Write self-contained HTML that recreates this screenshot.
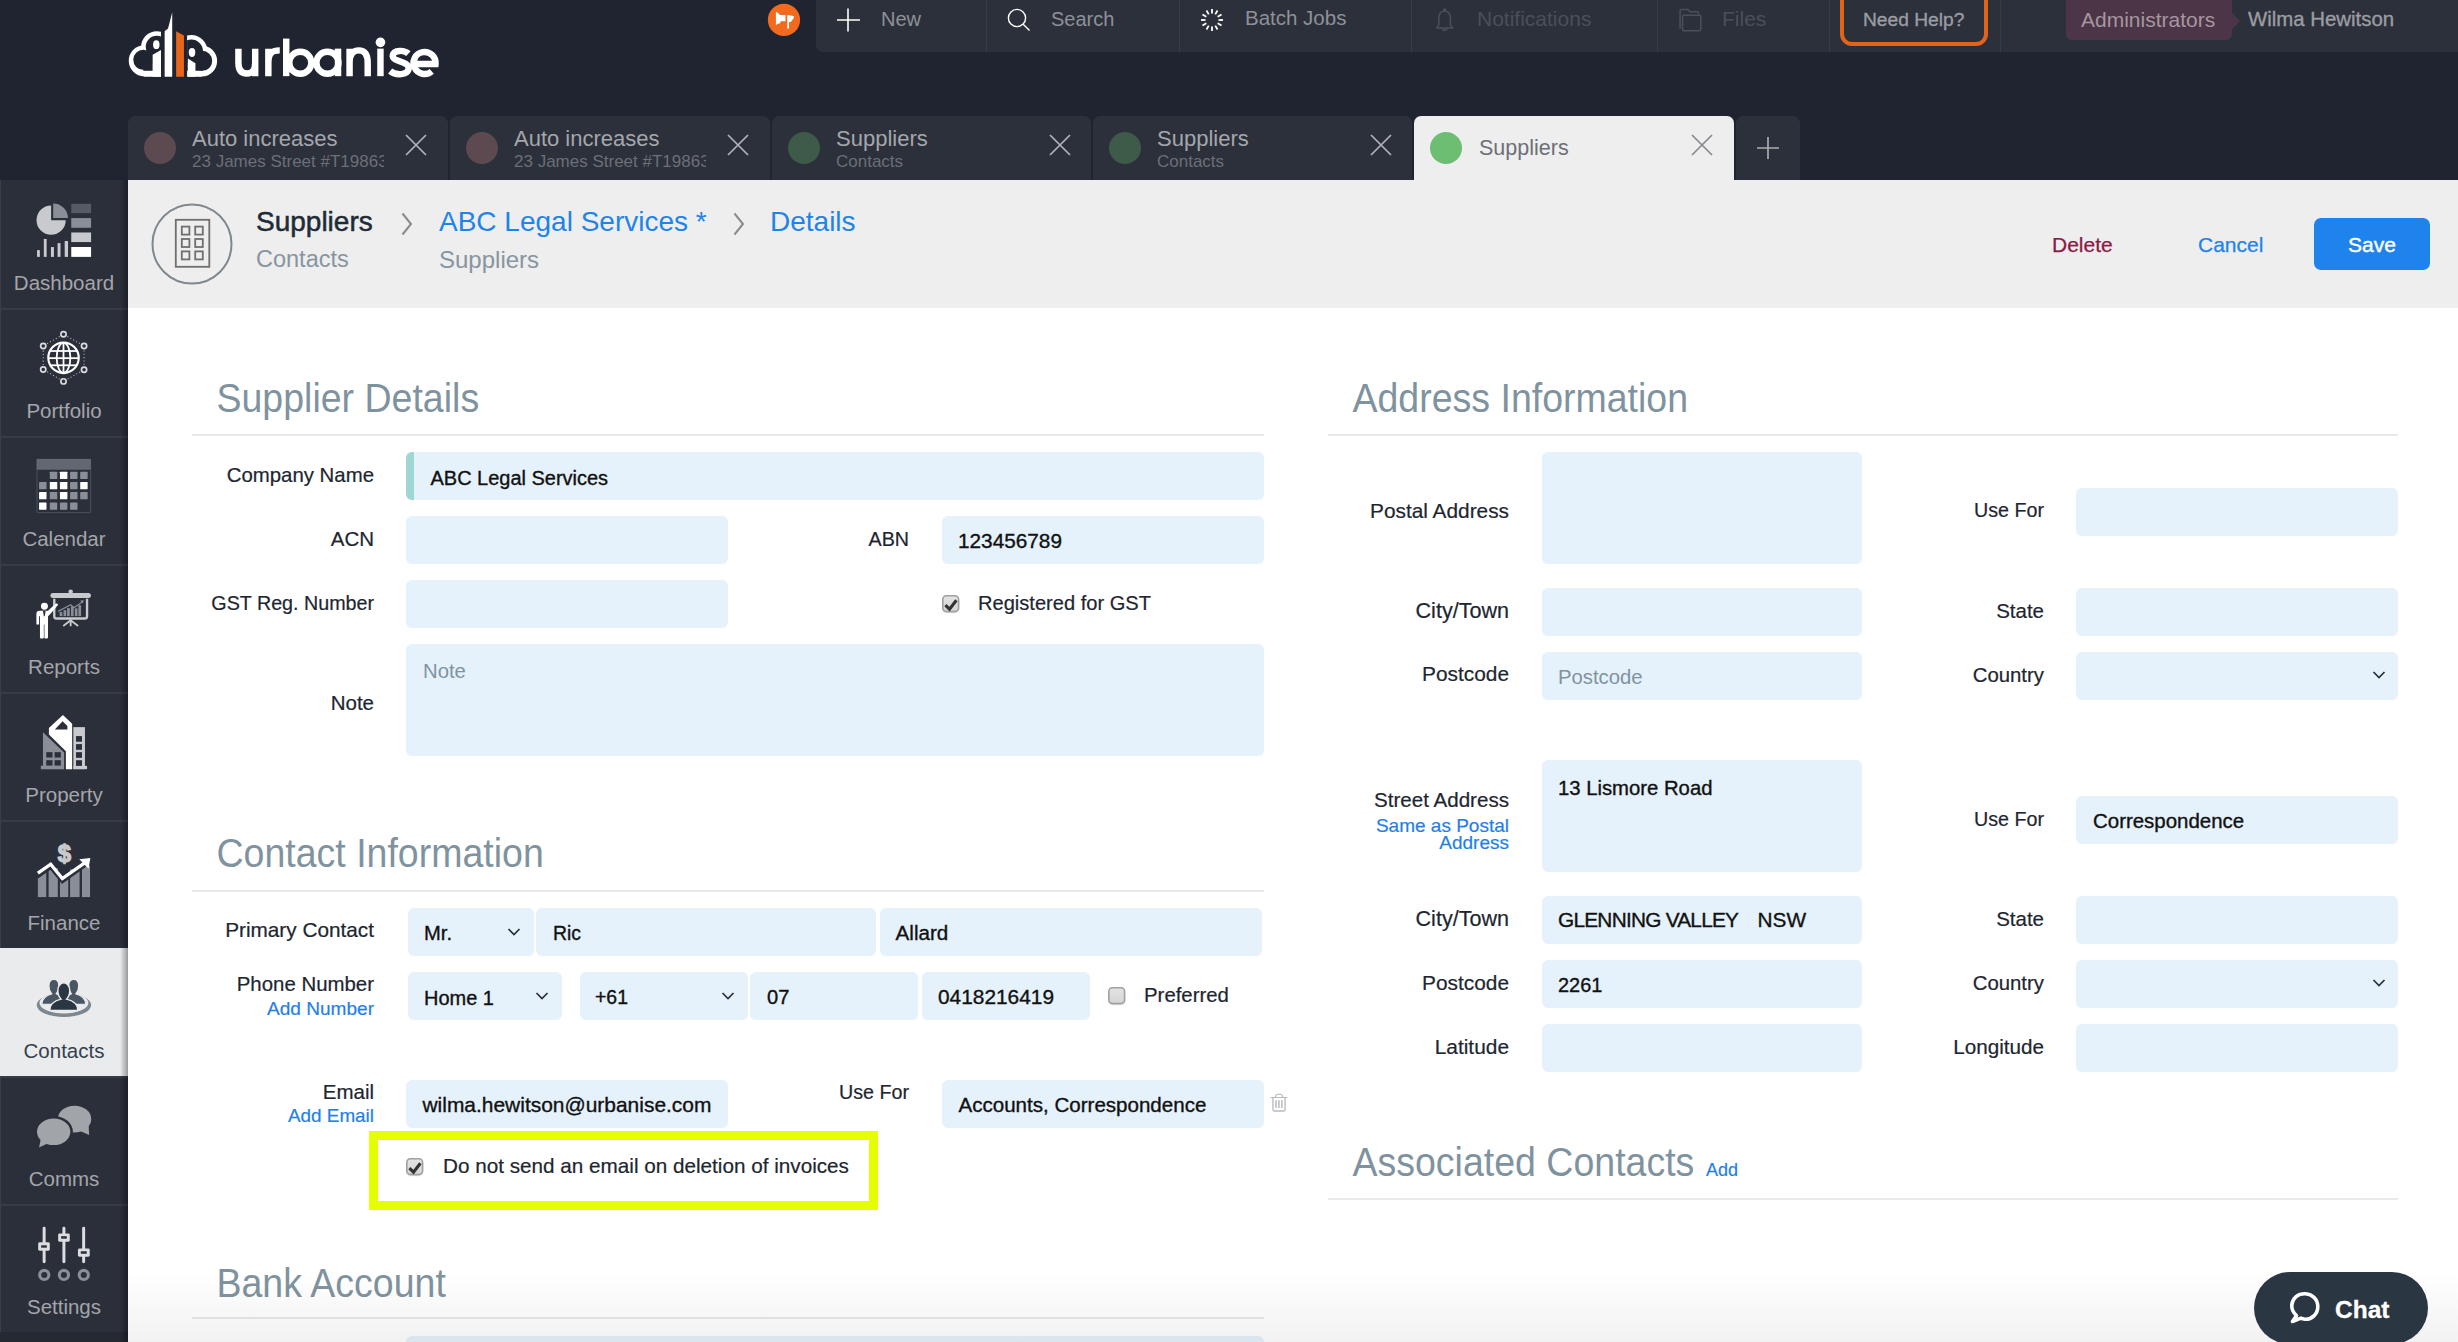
<!DOCTYPE html><html><head><meta charset="utf-8"><style>
html,body{margin:0;padding:0;}
body{width:2458px;height:1342px;overflow:hidden;position:relative;background:#fff;font-family:"Liberation Sans", sans-serif;}
.t{position:absolute;white-space:nowrap;}
.b{position:absolute;}
</style></head><body>
<div class="b" style="left:0px;top:0px;width:2458px;height:180px;background:#1f2430;border-radius:0;"></div>
<svg class="b" style="left:125px;top:10px;" width="100" height="70" viewBox="0 0 1917 1342">
<defs>
<clipPath id="cl"><rect x="0" y="0" width="690" height="1342"/></clipPath>
<clipPath id="cr"><rect x="1190" y="0" width="800" height="1342"/></clipPath>
</defs>
<g clip-path="url(#cl)">
<circle cx="370" cy="975" r="298" fill="#fff"/>
<circle cx="610" cy="705" r="300" fill="#fff"/>
<rect x="370" y="975" width="320" height="305" fill="#fff"/>
<circle cx="350" cy="955" r="192" fill="#1f2430"/>
<circle cx="610" cy="705" r="212" fill="#1f2430"/>
<rect x="350" y="900" width="185" height="265" fill="#1f2430"/>
<polygon points="530,860 690,765 690,1280 530,1280" fill="#fff"/>
<ellipse cx="600" cy="665" rx="62" ry="85" fill="#fff"/>
</g>
<g clip-path="url(#cr)">
<circle cx="1270" cy="790" r="310" fill="#fff"/>
<circle cx="1468" cy="978" r="298" fill="#fff"/>
<rect x="1190" y="978" width="278" height="302" fill="#fff"/>
<circle cx="1270" cy="790" r="225" fill="#1f2430"/>
<circle cx="1480" cy="975" r="192" fill="#1f2430"/>
<rect x="1190" y="900" width="300" height="265" fill="#1f2430"/>
<polygon points="1205,930 1350,1020 1350,1280 1205,1280" fill="#fff"/>
<ellipse cx="1285" cy="815" rx="62" ry="85" fill="#fff"/>
</g>
<polygon points="760,405 825,355 905,45 905,1280 760,1280" fill="#fff"/>
<polygon points="980,405 1130,490 1130,1280 980,1280" fill="#e8651a"/>
</svg>
<svg class="b" style="left:120px;top:5px;" width="330" height="85" viewBox="0 0 2458 633"><g fill="none" stroke="#fff" stroke-width="48">
<path d="M882,325 V430 C882,488 906,510 944,510 C984,510 1007,488 1007,430 V325 M1007,400 V530"/>
<path d="M1105,325 V530 M1105,430 C1105,365 1125,338 1190,338"/>
<path d="M1238,250 V530"/><circle cx="1343" cy="430" r="82"/>
<circle cx="1545" cy="430" r="82"/><path d="M1624,325 V530"/>
<path d="M1710,530 V325 M1710,430 C1710,365 1740,338 1778,338 C1818,338 1845,365 1845,430 V530"/>
<path d="M1940,325 V530"/>
<path d="M2148,362 C2120,336 2040,330 2032,375 C2024,425 2150,415 2150,470 C2150,528 2050,524 2012,492"/>
<path d="M2194,440 H2350 A82,82 0 1 0 2322,494"/>
</g><circle cx="1940" cy="278" r="36" fill="#fff"/></svg>
<svg class="b" style="left:764px;top:0px;" width="40" height="40" viewBox="0 0 1342 1342"><circle cx="670" cy="670" r="540" fill="#f26a1e"/>
<polygon points="400,400 470,440 540,500 720,500 720,710 560,710 540,780 470,800 400,840" fill="#fff"/>
<polygon points="780,500 1000,540 1000,600 900,740 840,740 840,960 780,960" fill="#fff"/></svg>
<div class="b" style="left:816px;top:0px;width:1642px;height:52px;background:#2c303b;border-radius:0 0 0 7px;"></div>
<div class="b" style="left:986px;top:0px;width:1px;height:52px;background:#383c47;border-radius:0;"></div>
<div class="b" style="left:1179px;top:0px;width:1px;height:52px;background:#383c47;border-radius:0;"></div>
<div class="b" style="left:1411px;top:0px;width:1px;height:52px;background:#383c47;border-radius:0;"></div>
<div class="b" style="left:1657px;top:0px;width:1px;height:52px;background:#383c47;border-radius:0;"></div>
<div class="b" style="left:1829px;top:0px;width:1px;height:52px;background:#383c47;border-radius:0;"></div>
<div class="b" style="left:2000px;top:0px;width:1px;height:52px;background:#383c47;border-radius:0;"></div>
<svg class="b" style="left:836px;top:7px;" width="26" height="26" viewBox="0 0 26 26"><path d="M12 1.5V24.5M1 13H24" stroke="#fff" stroke-width="1.6"/></svg>
<div class="t" style="left:881.0px;top:8.9px;font-size:20px;line-height:20px;color:#8e9197;font-weight:normal;">New</div>
<svg class="b" style="left:1006px;top:7px;" width="28" height="28" viewBox="0 0 28 28"><circle cx="11" cy="11" r="8.6" stroke="#fff" stroke-width="1.4" fill="none"/><path d="M17.2 17.2L23.5 23.5" stroke="#fff" stroke-width="1.4"/></svg>
<div class="t" style="left:1051.0px;top:8.9px;font-size:20px;line-height:20px;color:#8e9197;font-weight:normal;">Search</div>
<svg class="b" style="left:1200px;top:8px;" width="24" height="24" viewBox="0 0 24 24"><line x1="18.50" y1="12.00" x2="23.00" y2="12.00" stroke="#fff" stroke-width="1.8"/><line x1="17.63" y1="15.25" x2="21.53" y2="17.50" stroke="#fff" stroke-width="1.8"/><line x1="15.25" y1="17.63" x2="17.50" y2="21.53" stroke="#fff" stroke-width="1.8"/><line x1="12.00" y1="18.50" x2="12.00" y2="23.00" stroke="#fff" stroke-width="1.8"/><line x1="8.75" y1="17.63" x2="6.50" y2="21.53" stroke="#fff" stroke-width="1.8"/><line x1="6.37" y1="15.25" x2="2.47" y2="17.50" stroke="#fff" stroke-width="1.8"/><line x1="5.50" y1="12.00" x2="1.00" y2="12.00" stroke="#fff" stroke-width="1.8"/><line x1="6.37" y1="8.75" x2="2.47" y2="6.50" stroke="#fff" stroke-width="1.8"/><line x1="8.75" y1="6.37" x2="6.50" y2="2.47" stroke="#fff" stroke-width="1.8"/><line x1="12.00" y1="5.50" x2="12.00" y2="1.00" stroke="#fff" stroke-width="1.8"/><line x1="15.25" y1="6.37" x2="17.50" y2="2.47" stroke="#fff" stroke-width="1.8"/><line x1="17.63" y1="8.75" x2="21.53" y2="6.50" stroke="#fff" stroke-width="1.8"/></svg>
<div class="t" style="left:1245.0px;top:8.4px;font-size:20.5px;line-height:20.5px;color:#8e9197;font-weight:normal;">Batch Jobs</div>
<svg class="b" style="left:1420px;top:0px;" width="340" height="45" viewBox="0 0 2458 325"><g fill="none" stroke="#4a4f59" stroke-width="11" stroke-linejoin="round">
<path d="M120,202 L136,180 L136,132 C136,98 152,82 178,80 C204,82 220,98 220,132 L220,180 L236,202 Z"/>
<circle cx="178" cy="72" r="7"/>
<path d="M160,208 Q178,232 196,208"/>
<path d="M1880,208 V78 Q1880,68 1890,68 H1938 L1950,84 H2004 Q2014,84 2014,94 V106"/>
<path d="M1898,214 V120 Q1898,110 1908,110 H2020 Q2030,110 2030,120 V212 Q2030,222 2020,222 H1908 Q1898,222 1898,214 Z"/>
</g></svg>
<div class="t" style="left:1477.0px;top:8.0px;font-size:21px;line-height:21px;color:#4a4f59;font-weight:normal;">Notifications</div>
<div class="t" style="left:1722.0px;top:8.0px;font-size:21px;line-height:21px;color:#4a4f59;font-weight:normal;">Files</div>
<div class="b" style="left:1840px;top:-12px;width:140px;height:50px;border:4px solid #e0651b;border-radius:12px;"></div>
<div class="t" style="left:1863.0px;top:9.7px;font-size:19.2px;line-height:19.2px;color:#9a9da2;font-weight:normal;-webkit-text-stroke:0.35px #9a9da2;">Need Help?</div>
<div class="b" style="left:2066px;top:0px;width:166px;height:40px;background:#4b3547;border-radius:0 0 6px 6px;"></div>
<svg class="b" style="left:2231px;top:12px;" width="10" height="18" viewBox="0 0 10 18"><polygon points="0,0 9,9 0,18" fill="#4b3547"/></svg>
<div class="t" style="left:2081.0px;top:8.6px;font-size:21px;line-height:21px;color:#a6969f;font-weight:normal;">Administrators</div>
<div class="t" style="left:2248.0px;top:9.1px;font-size:20.4px;line-height:20.4px;color:#9b9da1;font-weight:normal;-webkit-text-stroke:0.35px #9b9da1;">Wilma Hewitson</div>
<div class="b" style="left:128px;top:116px;width:320px;height:64px;background:#2c303b;border-radius:7px 7px 0 0;"></div>
<svg class="b" style="left:144px;top:132px;" width="32" height="32" viewBox="0 0 32 32"><circle cx="16" cy="16" r="16" fill="#5c4a50"/></svg>
<div class="b" style="left:192px;top:120px;width:192px;height:56px;overflow:hidden;">
<div class="t" style="left:0;top:7.6px;font-size:22px;line-height:22px;color:#a4a7ab;">Auto increases</div>
<div class="t" style="left:0;top:33.4px;font-size:17px;line-height:17px;color:#6b6f76;">23 James Street #T19863</div>
</div>
<svg class="b" style="left:405px;top:134px;" width="22" height="22" viewBox="0 0 22 22"><path d="M1 1L21 21M21 1L1 21" stroke="#b2b5b8" stroke-width="1.7"/></svg>
<div class="b" style="left:450px;top:116px;width:320px;height:64px;background:#2c303b;border-radius:7px 7px 0 0;"></div>
<svg class="b" style="left:466px;top:132px;" width="32" height="32" viewBox="0 0 32 32"><circle cx="16" cy="16" r="16" fill="#5c4a50"/></svg>
<div class="b" style="left:514px;top:120px;width:192px;height:56px;overflow:hidden;">
<div class="t" style="left:0;top:7.6px;font-size:22px;line-height:22px;color:#a4a7ab;">Auto increases</div>
<div class="t" style="left:0;top:33.4px;font-size:17px;line-height:17px;color:#6b6f76;">23 James Street #T19863</div>
</div>
<svg class="b" style="left:727px;top:134px;" width="22" height="22" viewBox="0 0 22 22"><path d="M1 1L21 21M21 1L1 21" stroke="#b2b5b8" stroke-width="1.7"/></svg>
<div class="b" style="left:772px;top:116px;width:319px;height:64px;background:#2c303b;border-radius:7px 7px 0 0;"></div>
<svg class="b" style="left:788px;top:132px;" width="32" height="32" viewBox="0 0 32 32"><circle cx="16" cy="16" r="16" fill="#3e5a48"/></svg>
<div class="b" style="left:836px;top:120px;width:192px;height:56px;overflow:hidden;">
<div class="t" style="left:0;top:7.6px;font-size:22px;line-height:22px;color:#a4a7ab;">Suppliers</div>
<div class="t" style="left:0;top:33.4px;font-size:17px;line-height:17px;color:#6b6f76;">Contacts</div>
</div>
<svg class="b" style="left:1049px;top:134px;" width="22" height="22" viewBox="0 0 22 22"><path d="M1 1L21 21M21 1L1 21" stroke="#b2b5b8" stroke-width="1.7"/></svg>
<div class="b" style="left:1093px;top:116px;width:319px;height:64px;background:#2c303b;border-radius:7px 7px 0 0;"></div>
<svg class="b" style="left:1109px;top:132px;" width="32" height="32" viewBox="0 0 32 32"><circle cx="16" cy="16" r="16" fill="#3e5a48"/></svg>
<div class="b" style="left:1157px;top:120px;width:192px;height:56px;overflow:hidden;">
<div class="t" style="left:0;top:7.6px;font-size:22px;line-height:22px;color:#a4a7ab;">Suppliers</div>
<div class="t" style="left:0;top:33.4px;font-size:17px;line-height:17px;color:#6b6f76;">Contacts</div>
</div>
<svg class="b" style="left:1370px;top:134px;" width="22" height="22" viewBox="0 0 22 22"><path d="M1 1L21 21M21 1L1 21" stroke="#b2b5b8" stroke-width="1.7"/></svg>
<div class="b" style="left:1414px;top:116px;width:320px;height:66px;background:#eeeeee;border-radius:7px 7px 0 0;"></div>
<svg class="b" style="left:1430px;top:132px;" width="32" height="32" viewBox="0 0 32 32"><circle cx="16" cy="16" r="16" fill="#6dbd72"/></svg>
<div class="t" style="left:1479.0px;top:137.5px;font-size:21.5px;line-height:21.5px;color:#6c7076;font-weight:normal;">Suppliers</div>
<svg class="b" style="left:1691px;top:134px;" width="22" height="22" viewBox="0 0 22 22"><path d="M1 1L21 21M21 1L1 21" stroke="#86898d" stroke-width="1.7"/></svg>
<div class="b" style="left:1736px;top:116px;width:64px;height:64px;background:#2c303b;border-radius:7px 7px 0 0;"></div>
<svg class="b" style="left:1756px;top:136px;" width="24" height="24" viewBox="0 0 24 24"><path d="M12 1V23M1 12H23" stroke="#a9acb0" stroke-width="1.7"/></svg>
<div class="b" style="left:0px;top:180px;width:128px;height:1162px;background:#2b2f3a;border-radius:0;"></div>
<div class="b" style="left:0px;top:180px;width:1px;height:1162px;background:#3a3e49;border-radius:0;"></div>
<div class="b" style="left:0px;top:1332px;width:128px;height:10px;background:#252932;border-radius:0;"></div>
<div class="b" style="left:0px;top:308px;width:128px;height:2px;background:#383c47;border-radius:0;"></div>
<div class="b" style="left:0px;top:436px;width:128px;height:2px;background:#383c47;border-radius:0;"></div>
<div class="b" style="left:0px;top:564px;width:128px;height:2px;background:#383c47;border-radius:0;"></div>
<div class="b" style="left:0px;top:692px;width:128px;height:2px;background:#383c47;border-radius:0;"></div>
<div class="b" style="left:0px;top:820px;width:128px;height:2px;background:#383c47;border-radius:0;"></div>
<div class="b" style="left:0px;top:948px;width:128px;height:2px;background:#383c47;border-radius:0;"></div>
<div class="b" style="left:0px;top:1076px;width:128px;height:2px;background:#383c47;border-radius:0;"></div>
<div class="b" style="left:0px;top:1204px;width:128px;height:2px;background:#383c47;border-radius:0;"></div>
<div class="b" style="left:0px;top:948px;width:128px;height:128px;background:#eaebed;border-radius:0;"></div>
<div class="b" style="left:120px;top:180px;width:8px;height:1162px;background:linear-gradient(to right, rgba(0,0,0,0), rgba(0,0,0,0.35));border-radius:0;"></div>
<div class="t" style="left:-536.0px;width:1200px;text-align:center;top:272.6px;font-size:20.5px;line-height:20.5px;color:#a4a6aa;font-weight:normal;">Dashboard</div>
<div class="t" style="left:-536.0px;width:1200px;text-align:center;top:400.6px;font-size:20.5px;line-height:20.5px;color:#a4a6aa;font-weight:normal;">Portfolio</div>
<div class="t" style="left:-536.0px;width:1200px;text-align:center;top:528.6px;font-size:20.5px;line-height:20.5px;color:#a4a6aa;font-weight:normal;">Calendar</div>
<div class="t" style="left:-536.0px;width:1200px;text-align:center;top:656.6px;font-size:20.5px;line-height:20.5px;color:#a4a6aa;font-weight:normal;">Reports</div>
<div class="t" style="left:-536.0px;width:1200px;text-align:center;top:784.6px;font-size:20.5px;line-height:20.5px;color:#a4a6aa;font-weight:normal;">Property</div>
<div class="t" style="left:-536.0px;width:1200px;text-align:center;top:912.6px;font-size:20.5px;line-height:20.5px;color:#a4a6aa;font-weight:normal;">Finance</div>
<div class="t" style="left:-536.0px;width:1200px;text-align:center;top:1040.6px;font-size:20.5px;line-height:20.5px;color:#34414c;font-weight:normal;">Contacts</div>
<div class="t" style="left:-536.0px;width:1200px;text-align:center;top:1168.6px;font-size:20.5px;line-height:20.5px;color:#a4a6aa;font-weight:normal;">Comms</div>
<div class="t" style="left:-536.0px;width:1200px;text-align:center;top:1296.6px;font-size:20.5px;line-height:20.5px;color:#a4a6aa;font-weight:normal;">Settings</div>
<svg class="b" style="left:0px;top:180px;" width="140" height="140" viewBox="0 0 1342 1342">
<path d="M490,385 L490,245 A140,140 0 1 0 630,385 Z" fill="#c9cacd"/>
<path d="M510,365 L510,225 A142,142 0 0 1 652,365 Z" fill="#8a8e96"/>
<rect x="683" y="228" width="190" height="90" fill="#555a64"/>
<rect x="683" y="365" width="190" height="93" fill="#8a8e96"/>
<rect x="683" y="503" width="190" height="92" fill="#c9cacd"/>
<rect x="683" y="642" width="190" height="95" fill="#fff"/>
<rect x="355" y="672" width="27" height="65" fill="#c9cacd"/>
<rect x="420" y="565" width="27" height="172" fill="#c9cacd"/>
<rect x="488" y="643" width="29" height="94" fill="#c9cacd"/>
<rect x="552" y="605" width="28" height="132" fill="#c9cacd"/>
<rect x="620" y="585" width="32" height="152" fill="#c9cacd"/>
</svg>
<svg class="b" style="left:20px;top:320px;" width="90" height="80" viewBox="0 0 1510 1342"><line x1="795" y1="277" x2="1010" y2="398" stroke="#b9bbbf" stroke-width="18" stroke-dasharray="18 38"/><line x1="1075" y1="510" x2="1075" y2="760" stroke="#b9bbbf" stroke-width="18" stroke-dasharray="18 38"/><line x1="1010" y1="872" x2="795" y2="993" stroke="#b9bbbf" stroke-width="18" stroke-dasharray="18 38"/><line x1="665" y1="992" x2="455" y2="868" stroke="#b9bbbf" stroke-width="18" stroke-dasharray="18 38"/><line x1="390" y1="755" x2="390" y2="510" stroke="#b9bbbf" stroke-width="18" stroke-dasharray="18 38"/><line x1="455" y1="398" x2="665" y2="277" stroke="#b9bbbf" stroke-width="18" stroke-dasharray="18 38"/><circle cx="730" cy="240" r="44" fill="#2b2f3a" stroke="#dadbdd" stroke-width="28"/><circle cx="1075" cy="435" r="44" fill="#2b2f3a" stroke="#dadbdd" stroke-width="28"/><circle cx="1075" cy="835" r="44" fill="#2b2f3a" stroke="#dadbdd" stroke-width="28"/><circle cx="730" cy="1030" r="44" fill="#2b2f3a" stroke="#dadbdd" stroke-width="28"/><circle cx="390" cy="830" r="44" fill="#2b2f3a" stroke="#dadbdd" stroke-width="28"/><circle cx="390" cy="435" r="44" fill="#2b2f3a" stroke="#dadbdd" stroke-width="28"/>
<circle cx="730" cy="635" r="255" fill="#2b2f3a" stroke="#fff" stroke-width="36"/>
<ellipse cx="730" cy="635" rx="115" ry="250" fill="none" stroke="#fff" stroke-width="30"/>
<line x1="730" y1="385" x2="730" y2="885" stroke="#fff" stroke-width="30"/>
<line x1="500" y1="520" x2="960" y2="520" stroke="#fff" stroke-width="30"/>
<line x1="480" y1="640" x2="980" y2="640" stroke="#fff" stroke-width="30"/>
<line x1="500" y1="760" x2="960" y2="760" stroke="#fff" stroke-width="30"/>
</svg>
<svg class="b" style="left:20px;top:445px;" width="90" height="80" viewBox="0 0 1510 1342"><rect x="285" y="240" width="900" height="895" rx="14" fill="#2b2f3a" stroke="#545862" stroke-width="14"/><rect x="280" y="235" width="910" height="180" rx="10" fill="#636772"/><rect x="500" y="450" width="125" height="122" rx="8" fill="#8a8e96"/><rect x="670" y="450" width="125" height="122" rx="8" fill="#fff"/><rect x="840" y="450" width="125" height="122" rx="8" fill="#8a8e96"/><rect x="1010" y="450" width="125" height="122" rx="8" fill="#8a8e96"/><rect x="320" y="620" width="125" height="122" rx="8" fill="#8a8e96"/><rect x="500" y="620" width="125" height="122" rx="8" fill="#fff"/><rect x="670" y="620" width="125" height="122" rx="8" fill="#fff"/><rect x="840" y="620" width="125" height="122" rx="8" fill="#8a8e96"/><rect x="1010" y="620" width="125" height="122" rx="8" fill="#fff"/><rect x="320" y="790" width="125" height="122" rx="8" fill="#fff"/><rect x="500" y="790" width="125" height="122" rx="8" fill="#8a8e96"/><rect x="670" y="790" width="125" height="122" rx="8" fill="#fff"/><rect x="840" y="790" width="125" height="122" rx="8" fill="#8a8e96"/><rect x="1010" y="790" width="125" height="122" rx="8" fill="#8a8e96"/><rect x="320" y="965" width="125" height="122" rx="8" fill="#fff"/><rect x="500" y="965" width="125" height="122" rx="8" fill="#8a8e96"/><rect x="670" y="965" width="125" height="122" rx="8" fill="#8a8e96"/><rect x="840" y="965" width="125" height="122" rx="8" fill="#8a8e96"/></svg>
<svg class="b" style="left:20px;top:575px;" width="90" height="80" viewBox="0 0 1510 1342">
<circle cx="850" cy="280" r="38" fill="#c9cacd"/>
<rect x="510" y="300" width="680" height="85" rx="42" fill="#c9cacd"/>
<path d="M575,400 L575,690 Q575,730 615,730 L1085,730 Q1125,730 1125,690 L1125,400" fill="none" stroke="#c9cacd" stroke-width="40"/>
<path d="M850,740 L850,860 M850,760 L725,855 M850,760 L975,855" stroke="#c9cacd" stroke-width="30"/>
<rect x="665" y="620" width="45" height="70" fill="#8a8e96"/>
<rect x="730" y="590" width="45" height="100" fill="#8a8e96"/>
<rect x="790" y="555" width="45" height="135" fill="#8a8e96"/>
<rect x="855" y="525" width="45" height="165" fill="#8a8e96"/>
<rect x="920" y="560" width="45" height="130" fill="#8a8e96"/>
<rect x="980" y="505" width="45" height="185" fill="#8a8e96"/>
<polyline points="640,610 850,500 905,550 1040,455" fill="none" stroke="#8a8e96" stroke-width="20"/>
<polygon points="1010,430 1070,420 1055,480" fill="#8a8e96"/>
<circle cx="410" cy="525" r="58" fill="#fff"/>
<path d="M275,650 Q275,600 330,600 L470,600 L600,480 Q625,470 640,500 L520,640 L470,690 L470,1050 Q470,1065 450,1065 L420,1065 Q410,1065 410,1050 L410,830 L400,830 L400,1050 Q400,1065 385,1065 L350,1065 Q335,1065 335,1050 L335,690 L320,690 L320,830 L275,830 Z" fill="#fff"/>
<polygon points="385,605 430,605 415,690 400,690" fill="#2b2f3a"/>
</svg>
<svg class="b" style="left:20px;top:700px;" width="90" height="80" viewBox="0 0 1510 1342">
<polygon points="385,540 740,880 740,1160 350,1160 350,1105 385,1105" fill="#8a8e96"/>
<rect x="440" y="875" width="105" height="90" fill="#2b2f3a"/><rect x="580" y="875" width="105" height="90" fill="#2b2f3a"/>
<rect x="440" y="1010" width="105" height="90" fill="#2b2f3a"/><rect x="580" y="1010" width="105" height="90" fill="#2b2f3a"/>
<polygon points="485,470 720,250 875,400 875,1160 770,1160 770,860 485,580" fill="#fff"/>
<polygon points="585,495 715,355 795,435 795,495" fill="#2b2f3a"/>
<rect x="895" y="455" width="195" height="705" fill="#c9cacd"/>
<rect x="895" y="1105" width="230" height="55" fill="#c9cacd"/>
<rect x="940" y="605" width="100" height="95" fill="#2b2f3a"/><rect x="940" y="740" width="100" height="95" fill="#2b2f3a"/>
<rect x="940" y="875" width="100" height="95" fill="#2b2f3a"/><rect x="940" y="1010" width="100" height="95" fill="#2b2f3a"/>
</svg>
<svg class="b" style="left:20px;top:830px;" width="90" height="80" viewBox="0 0 1510 1342">
<rect x="300" y="700" width="140" height="425" fill="#8a8e96"/>
<rect x="480" y="640" width="155" height="485" fill="#8a8e96"/>
<rect x="670" y="780" width="140" height="345" fill="#8a8e96"/>
<rect x="840" y="660" width="160" height="465" fill="#8a8e96"/>
<rect x="1040" y="600" width="135" height="525" fill="#8a8e96"/>
<polyline points="290,780 515,620 710,860 1090,590" fill="none" stroke="#2b2f3a" stroke-width="70"/>
<polyline points="300,725 515,575 710,815 1080,555" fill="none" stroke="#fff" stroke-width="55"/>
<polygon points="995,490 1180,468 1150,648" fill="#fff"/>
<text x="745" y="535" text-anchor="middle" font-family="Liberation Sans" font-weight="bold" font-size="400" fill="#c9cacd" stroke="#c9cacd" stroke-width="22">$</text>
</svg>
<svg class="b" style="left:20px;top:958px;" width="90" height="80" viewBox="0 0 1510 1342">
<ellipse cx="737" cy="790" rx="457" ry="200" fill="#7b8892"/>
<ellipse cx="737" cy="752" rx="410" ry="178" fill="#eaebed"/>
<g fill="#4a5763" stroke="#eaebed" stroke-width="22">
<path d="M365,775 C370,680 420,630 530,600 C500,570 485,530 485,470 C485,400 520,360 568,360 C616,360 653,400 653,470 C653,530 640,570 610,600 L700,640 L700,780 Z"/>
<path d="M1105,775 C1100,680 1050,630 940,600 C970,570 985,530 985,470 C985,400 950,360 902,360 C854,360 817,400 817,470 C817,530 830,570 860,600 L770,640 L770,780 Z"/>
</g>
<path d="M500,880 C500,790 560,720 690,690 C650,650 635,600 635,545 C635,470 680,415 735,415 C790,415 835,470 835,545 C835,600 820,650 780,690 C910,720 970,790 970,880 Z" fill="#2a3642" stroke="#eaebed" stroke-width="24"/>
</svg>
<svg class="b" style="left:20px;top:1086px;" width="90" height="80" viewBox="0 0 1510 1342">
<ellipse cx="915" cy="555" rx="280" ry="225" fill="#a1a4a9"/>
<polygon points="1150,630 1160,822 990,745" fill="#a1a4a9"/>
<ellipse cx="565" cy="768" rx="322" ry="266" fill="#2b2f3a"/>
<ellipse cx="565" cy="768" rx="280" ry="222" fill="#a1a4a9"/>
<polygon points="350,880 320,1030 470,960" fill="#a1a4a9"/>
</svg>
<svg class="b" style="left:20px;top:1214px;" width="90" height="80" viewBox="0 0 1510 1342">
<path d="M405,240V800 M737,240V800 M1068,240V800" stroke="#dcdde0" stroke-width="50" stroke-linecap="round"/>
<rect x="305" y="475" width="195" height="140" rx="25" fill="#dcdde0"/><rect x="355" y="525" width="95" height="40" fill="#2b2f3a"/>
<rect x="640" y="325" width="195" height="140" rx="25" fill="#dcdde0"/><rect x="690" y="372" width="95" height="42" fill="#2b2f3a"/>
<rect x="972" y="577" width="198" height="142" rx="25" fill="#dcdde0"/><rect x="1020" y="625" width="100" height="42" fill="#2b2f3a"/>
<circle cx="407" cy="1022" r="77" fill="none" stroke="#8a8e96" stroke-width="52"/>
<circle cx="737" cy="1022" r="77" fill="none" stroke="#8a8e96" stroke-width="52"/>
<circle cx="1070" cy="1022" r="77" fill="none" stroke="#8a8e96" stroke-width="52"/>
</svg>
<div class="b" style="left:128px;top:180px;width:2330px;height:128px;background:#eeeeee;border-radius:0;"></div>
<svg class="b" style="left:150px;top:202px;" width="84" height="84" viewBox="0 0 84 84"><circle cx="42" cy="42" r="39.5" fill="none" stroke="#7f888e" stroke-width="2"/>
<rect x="25.8" y="17.8" width="33.5" height="47" fill="none" stroke="#6f6f6f" stroke-width="1.8"/>
<rect x="31.8" y="24.6" width="7.6" height="8" fill="none" stroke="#6f6f6f" stroke-width="1.8"/>
<rect x="45.2" y="24.6" width="7.6" height="8" fill="none" stroke="#6f6f6f" stroke-width="1.8"/>
<rect x="31.8" y="37" width="7.6" height="8" fill="none" stroke="#6f6f6f" stroke-width="1.8"/>
<rect x="45.2" y="37" width="7.6" height="8" fill="none" stroke="#6f6f6f" stroke-width="1.8"/>
<rect x="31.8" y="49.4" width="7.6" height="8" fill="none" stroke="#6f6f6f" stroke-width="1.8"/>
<rect x="45.2" y="49.4" width="7.6" height="8" fill="none" stroke="#6f6f6f" stroke-width="1.8"/></svg>
<div class="t" style="left:256.0px;top:208.3px;font-size:28px;line-height:28px;color:#1e2b36;font-weight:normal;-webkit-text-stroke:0.5px #1e2b36;">Suppliers</div>
<div class="t" style="left:256.0px;top:248.1px;font-size:23.5px;line-height:23.5px;color:#8795a0;font-weight:normal;">Contacts</div>
<svg class="b" style="left:401px;top:212px;" width="13" height="24" viewBox="0 0 13 24"><path d="M1.5 1.5L10 12L1.5 22.5" fill="none" stroke="#8a8a8a" stroke-width="2"/></svg>
<div class="t" style="left:439.0px;top:208.3px;font-size:28px;line-height:28px;color:#1e84ea;font-weight:normal;">ABC Legal Services *</div>
<div class="t" style="left:439.0px;top:247.7px;font-size:24px;line-height:24px;color:#8795a0;font-weight:normal;">Suppliers</div>
<svg class="b" style="left:733px;top:212px;" width="13" height="24" viewBox="0 0 13 24"><path d="M1.5 1.5L10 12L1.5 22.5" fill="none" stroke="#8a8a8a" stroke-width="2"/></svg>
<div class="t" style="left:770.0px;top:208.3px;font-size:28px;line-height:28px;color:#1e84ea;font-weight:normal;">Details</div>
<div class="t" style="left:2052.0px;top:234.2px;font-size:21px;line-height:21px;color:#8a1a46;font-weight:normal;-webkit-text-stroke:0.25px #8a1a46;">Delete</div>
<div class="t" style="left:2198.0px;top:234.2px;font-size:21px;line-height:21px;color:#1e84ea;font-weight:normal;-webkit-text-stroke:0.25px #1e84ea;">Cancel</div>
<div class="b" style="left:2314px;top:218px;width:116px;height:52px;background:#1f83ee;border-radius:7px;"></div>
<div class="t" style="left:1772.0px;width:1200px;text-align:center;top:234.2px;font-size:21px;line-height:21px;color:#ffffff;font-weight:normal;-webkit-text-stroke:0.4px #ffffff;">Save</div>
<div class="t" style="left:216.5px;top:380.6px;font-size:37.5px;line-height:37.5px;color:#7f939f;font-weight:normal;transform:scaleY(1.06);transform-origin:0 84.65%;">Supplier Details</div>
<div class="b" style="left:192px;top:434px;width:1072px;height:2px;background:#e9e9e9;border-radius:0;"></div>
<div class="t" style="left:-826.0px;width:1200px;text-align:right;top:465.2px;font-size:20.4px;line-height:20.4px;color:#1d2630;font-weight:normal;-webkit-text-stroke:0.2px #1d2630;">Company Name</div>
<div class="b" style="left:406px;top:452px;width:858px;height:48px;background:#e5f1fb;border-radius:6px;"></div>
<div class="b" style="left:406px;top:452px;width:8px;height:48px;background:#9fd7d2;border-radius:6px 0 0 6px;"></div>
<div class="t" style="left:430.5px;top:467.8px;font-size:19.98px;line-height:19.98px;color:#111;font-weight:normal;-webkit-text-stroke:0.35px #111;">ABC Legal Services</div>
<div class="t" style="left:-826.0px;width:1200px;text-align:right;top:529.0px;font-size:20.5px;line-height:20.5px;color:#1d2630;font-weight:normal;-webkit-text-stroke:0.2px #1d2630;">ACN</div>
<div class="b" style="left:406px;top:516px;width:322px;height:48px;background:#e5f1fb;border-radius:6px;"></div>
<div class="t" style="left:-291.0px;width:1200px;text-align:right;top:529.7px;font-size:19.7px;line-height:19.7px;color:#1d2630;font-weight:normal;-webkit-text-stroke:0.2px #1d2630;">ABN</div>
<div class="b" style="left:942px;top:516px;width:322px;height:48px;background:#e5f1fb;border-radius:6px;"></div>
<div class="t" style="left:958.0px;top:530.7px;font-size:20.78px;line-height:20.78px;color:#111;font-weight:normal;-webkit-text-stroke:0.35px #111;">123456789</div>
<div class="t" style="left:-826.0px;width:1200px;text-align:right;top:593.5px;font-size:19.7px;line-height:19.7px;color:#1d2630;font-weight:normal;-webkit-text-stroke:0.2px #1d2630;">GST Reg. Number</div>
<div class="b" style="left:406px;top:580px;width:322px;height:48px;background:#e5f1fb;border-radius:6px;"></div>
<svg class="b" style="left:942px;top:594.8px;overflow:visible" width="18" height="18" viewBox="0 0 18 18"><defs><linearGradient id="cg1" x1="0" y1="0" x2="0" y2="1"><stop offset="0" stop-color="#e4e4e4"/><stop offset="1" stop-color="#d4d4d4"/></linearGradient></defs><rect x="0.2" y="1.4" width="17" height="17" rx="4" fill="#000" opacity="0.06"/><rect x="0.8" y="0.8" width="15.8" height="15.8" rx="3.6" fill="url(#cg1)" stroke="#a0a0a0" stroke-width="1.6"/><path d="M3.4 10.2L7.5 14.1L14.4 5.3" fill="none" stroke="#333" stroke-width="3.1"/></svg>
<div class="t" style="left:978.0px;top:593.3px;font-size:20.08px;line-height:20.08px;color:#1d2630;font-weight:normal;-webkit-text-stroke:0.2px #1d2630;">Registered for GST</div>
<div class="t" style="left:-826.0px;width:1200px;text-align:right;top:692.5px;font-size:20.5px;line-height:20.5px;color:#1d2630;font-weight:normal;-webkit-text-stroke:0.2px #1d2630;">Note</div>
<div class="b" style="left:406px;top:644px;width:858px;height:112px;background:#e5f1fb;border-radius:6px;"></div>
<div class="t" style="left:423.0px;top:660.9px;font-size:20.3px;line-height:20.3px;color:#80949f;font-weight:normal;">Note</div>
<div class="t" style="left:216.5px;top:835.9px;font-size:37.5px;line-height:37.5px;color:#7f939f;font-weight:normal;transform:scaleY(1.06);transform-origin:0 84.65%;">Contact Information</div>
<div class="b" style="left:192px;top:890px;width:1072px;height:2px;background:#e9e9e9;border-radius:0;"></div>
<div class="t" style="left:-826.0px;width:1200px;text-align:right;top:920.0px;font-size:20.78px;line-height:20.78px;color:#1d2630;font-weight:normal;-webkit-text-stroke:0.2px #1d2630;">Primary Contact</div>
<div class="b" style="left:408px;top:908px;width:126px;height:48px;background:#e5f1fb;border-radius:6px;"></div>
<div class="t" style="left:424.0px;top:923.3px;font-size:20.16px;line-height:20.16px;color:#111;font-weight:normal;-webkit-text-stroke:0.35px #111;">Mr.</div>
<svg class="b" style="left:506.5px;top:926.5px;" width="14" height="10" viewBox="0 0 14 10"><path d="M1.5 2L7 7.5L12.5 2" fill="none" stroke="#2a2f36" stroke-width="1.7"/></svg>
<div class="b" style="left:536px;top:908px;width:340px;height:48px;background:#e5f1fb;border-radius:6px;"></div>
<div class="t" style="left:553.0px;top:924.0px;font-size:19.39px;line-height:19.39px;color:#111;font-weight:normal;-webkit-text-stroke:0.35px #111;">Ric</div>
<div class="b" style="left:880px;top:908px;width:382px;height:48px;background:#e5f1fb;border-radius:6px;"></div>
<div class="t" style="left:895.6px;top:923.0px;font-size:20.61px;line-height:20.61px;color:#111;font-weight:normal;-webkit-text-stroke:0.35px #111;">Allard</div>
<div class="t" style="left:-826.0px;width:1200px;text-align:right;top:974.0px;font-size:20.41px;line-height:20.41px;color:#1d2630;font-weight:normal;-webkit-text-stroke:0.2px #1d2630;">Phone Number</div>
<div class="t" style="left:-826.0px;width:1200px;text-align:right;top:999.3px;font-size:19.06px;line-height:19.06px;color:#1f80ea;font-weight:normal;-webkit-text-stroke:0.2px #1f80ea;">Add Number</div>
<div class="b" style="left:408px;top:972px;width:154px;height:48px;background:#e5f1fb;border-radius:6px;"></div>
<div class="t" style="left:424.0px;top:987.5px;font-size:19.99px;line-height:19.99px;color:#111;font-weight:normal;-webkit-text-stroke:0.35px #111;">Home 1</div>
<svg class="b" style="left:535px;top:990.5px;" width="14" height="10" viewBox="0 0 14 10"><path d="M1.5 2L7 7.5L12.5 2" fill="none" stroke="#2a2f36" stroke-width="1.7"/></svg>
<div class="b" style="left:580px;top:972px;width:168px;height:48px;background:#e5f1fb;border-radius:6px;"></div>
<div class="t" style="left:595.0px;top:987.9px;font-size:19.46px;line-height:19.46px;color:#111;font-weight:normal;-webkit-text-stroke:0.35px #111;">+61</div>
<svg class="b" style="left:721px;top:990.5px;" width="14" height="10" viewBox="0 0 14 10"><path d="M1.5 2L7 7.5L12.5 2" fill="none" stroke="#2a2f36" stroke-width="1.7"/></svg>
<div class="b" style="left:750px;top:972px;width:168px;height:48px;background:#e5f1fb;border-radius:6px;"></div>
<div class="t" style="left:767.0px;top:987.4px;font-size:20.14px;line-height:20.14px;color:#111;font-weight:normal;-webkit-text-stroke:0.35px #111;">07</div>
<div class="b" style="left:922px;top:972px;width:168px;height:48px;background:#e5f1fb;border-radius:6px;"></div>
<div class="t" style="left:938.0px;top:986.7px;font-size:20.86px;line-height:20.86px;color:#111;font-weight:normal;-webkit-text-stroke:0.35px #111;">0418216419</div>
<svg class="b" style="left:1108px;top:986.5px;overflow:visible" width="18" height="18" viewBox="0 0 18 18"><defs><linearGradient id="cg2" x1="0" y1="0" x2="0" y2="1"><stop offset="0" stop-color="#e4e4e4"/><stop offset="1" stop-color="#d4d4d4"/></linearGradient></defs><rect x="0.2" y="1.4" width="17" height="17" rx="4" fill="#000" opacity="0.06"/><rect x="0.8" y="0.8" width="15.8" height="15.8" rx="3.6" fill="url(#cg2)" stroke="#a0a0a0" stroke-width="1.6"/></svg>
<div class="t" style="left:1144.0px;top:984.7px;font-size:20.39px;line-height:20.39px;color:#1d2630;font-weight:normal;-webkit-text-stroke:0.2px #1d2630;">Preferred</div>
<div class="t" style="left:-826.0px;width:1200px;text-align:right;top:1082.2px;font-size:20.5px;line-height:20.5px;color:#1d2630;font-weight:normal;-webkit-text-stroke:0.2px #1d2630;">Email</div>
<div class="t" style="left:-826.0px;width:1200px;text-align:right;top:1107.3px;font-size:18.87px;line-height:18.87px;color:#1f80ea;font-weight:normal;-webkit-text-stroke:0.2px #1f80ea;">Add Email</div>
<div class="b" style="left:406px;top:1080px;width:322px;height:48px;background:#e5f1fb;border-radius:6px;"></div>
<div class="t" style="left:422.5px;top:1094.8px;font-size:20.94px;line-height:20.94px;color:#111;font-weight:normal;-webkit-text-stroke:0.35px #111;">wilma.hewitson@urbanise.com</div>
<div class="t" style="left:-291.0px;width:1200px;text-align:right;top:1083.2px;font-size:19.69px;line-height:19.69px;color:#1d2630;font-weight:normal;-webkit-text-stroke:0.2px #1d2630;">Use For</div>
<div class="b" style="left:942px;top:1080px;width:322px;height:48px;background:#e5f1fb;border-radius:6px;"></div>
<div class="t" style="left:958.5px;top:1095.0px;font-size:20.56px;line-height:20.56px;color:#111;font-weight:normal;-webkit-text-stroke:0.35px #111;">Accounts, Correspondence</div>
<svg class="b" style="left:1260px;top:1085px;" width="40" height="35" viewBox="0 0 1534 1342"><g fill="none" stroke="#b8bbbf" stroke-linecap="round"><path d="M420,478H1030" stroke-width="42"/><path d="M592,462L625,372Q635,352 662,352H798Q825,352 835,372L868,462" stroke-width="42"/><path d="M497,500V935Q497,995 555,995H903Q961,995 961,935V500" stroke-width="52"/><path d="M612,600V860M726,600V860M840,600V860" stroke-width="58"/></g></svg>
<div class="b" style="left:369px;top:1131px;width:491px;height:61px;border:9px solid #e6ff00;"></div>
<svg class="b" style="left:406.2px;top:1158.2px;overflow:visible" width="18" height="18" viewBox="0 0 18 18"><defs><linearGradient id="cg3" x1="0" y1="0" x2="0" y2="1"><stop offset="0" stop-color="#e4e4e4"/><stop offset="1" stop-color="#d4d4d4"/></linearGradient></defs><rect x="0.2" y="1.4" width="17" height="17" rx="4" fill="#000" opacity="0.06"/><rect x="0.8" y="0.8" width="15.8" height="15.8" rx="3.6" fill="url(#cg3)" stroke="#a0a0a0" stroke-width="1.6"/><path d="M3.4 10.2L7.5 14.1L14.4 5.3" fill="none" stroke="#333" stroke-width="3.1"/></svg>
<div class="t" style="left:443.0px;top:1156.3px;font-size:20.69px;line-height:20.69px;color:#1d2630;font-weight:normal;-webkit-text-stroke:0.2px #1d2630;">Do not send an email on deletion of invoices</div>
<div class="t" style="left:216.5px;top:1265.8px;font-size:37.5px;line-height:37.5px;color:#7f939f;font-weight:normal;transform:scaleY(1.06);transform-origin:0 84.65%;">Bank Account</div>
<div class="b" style="left:192px;top:1317px;width:1072px;height:2px;background:#e9e9e9;border-radius:0;"></div>
<div class="b" style="left:406px;top:1336px;width:858px;height:64px;background:#e5f1fb;border-radius:6px;"></div>
<div class="t" style="left:1352.5px;top:380.6px;font-size:37.5px;line-height:37.5px;color:#7f939f;font-weight:normal;transform:scaleY(1.06);transform-origin:0 84.65%;">Address Information</div>
<div class="b" style="left:1328px;top:434px;width:1070px;height:2px;background:#e9e9e9;border-radius:0;"></div>
<div class="t" style="left:309.0px;width:1200px;text-align:right;top:500.5px;font-size:20.84px;line-height:20.84px;color:#1d2630;font-weight:normal;-webkit-text-stroke:0.2px #1d2630;">Postal Address</div>
<div class="b" style="left:1542px;top:452px;width:320px;height:112px;background:#e5f1fb;border-radius:6px;"></div>
<div class="t" style="left:844.0px;width:1200px;text-align:right;top:501.0px;font-size:19.69px;line-height:19.69px;color:#1d2630;font-weight:normal;-webkit-text-stroke:0.2px #1d2630;">Use For</div>
<div class="b" style="left:2076px;top:488px;width:322px;height:48px;background:#e5f1fb;border-radius:6px;"></div>
<div class="t" style="left:309.0px;width:1200px;text-align:right;top:600.1px;font-size:21.57px;line-height:21.57px;color:#1d2630;font-weight:normal;-webkit-text-stroke:0.2px #1d2630;">City/Town</div>
<div class="b" style="left:1542px;top:588px;width:320px;height:48px;background:#e5f1fb;border-radius:6px;"></div>
<div class="t" style="left:844.0px;width:1200px;text-align:right;top:600.8px;font-size:20.5px;line-height:20.5px;color:#1d2630;font-weight:normal;-webkit-text-stroke:0.2px #1d2630;">State</div>
<div class="b" style="left:2076px;top:588px;width:322px;height:48px;background:#e5f1fb;border-radius:6px;"></div>
<div class="t" style="left:309.0px;width:1200px;text-align:right;top:664.3px;font-size:20.87px;line-height:20.87px;color:#1d2630;font-weight:normal;-webkit-text-stroke:0.2px #1d2630;">Postcode</div>
<div class="b" style="left:1542px;top:652px;width:320px;height:48px;background:#e5f1fb;border-radius:6px;"></div>
<div class="t" style="left:1558.0px;top:667.0px;font-size:20.3px;line-height:20.3px;color:#80949f;font-weight:normal;">Postcode</div>
<div class="t" style="left:844.0px;width:1200px;text-align:right;top:664.7px;font-size:20.37px;line-height:20.37px;color:#1d2630;font-weight:normal;-webkit-text-stroke:0.2px #1d2630;">Country</div>
<div class="b" style="left:2076px;top:652px;width:322px;height:48px;background:#e5f1fb;border-radius:6px;"></div>
<svg class="b" style="left:2371.5px;top:670px;" width="14" height="10" viewBox="0 0 14 10"><path d="M1.5 2L7 7.5L12.5 2" fill="none" stroke="#2a2f36" stroke-width="1.7"/></svg>
<div class="t" style="left:309.0px;width:1200px;text-align:right;top:790.4px;font-size:20.58px;line-height:20.58px;color:#1d2630;font-weight:normal;-webkit-text-stroke:0.2px #1d2630;">Street Address</div>
<div class="t" style="left:309.0px;width:1200px;text-align:right;top:815.5px;font-size:19px;line-height:19px;color:#1f80ea;font-weight:normal;-webkit-text-stroke:0.2px #1f80ea;">Same as Postal</div>
<div class="t" style="left:309.0px;width:1200px;text-align:right;top:833.2px;font-size:19px;line-height:19px;color:#1f80ea;font-weight:normal;-webkit-text-stroke:0.2px #1f80ea;">Address</div>
<div class="b" style="left:1542px;top:760px;width:320px;height:112px;background:#e5f1fb;border-radius:6px;"></div>
<div class="t" style="left:1558.0px;top:777.6px;font-size:20.29px;line-height:20.29px;color:#111;font-weight:normal;-webkit-text-stroke:0.35px #111;">13 Lismore Road</div>
<div class="t" style="left:844.0px;width:1200px;text-align:right;top:809.5px;font-size:19.69px;line-height:19.69px;color:#1d2630;font-weight:normal;-webkit-text-stroke:0.2px #1d2630;">Use For</div>
<div class="b" style="left:2076px;top:796px;width:322px;height:48px;background:#e5f1fb;border-radius:6px;"></div>
<div class="t" style="left:2093.0px;top:811.2px;font-size:20.46px;line-height:20.46px;color:#111;font-weight:normal;-webkit-text-stroke:0.35px #111;">Correspondence</div>
<div class="t" style="left:309.0px;width:1200px;text-align:right;top:907.6px;font-size:21.57px;line-height:21.57px;color:#1d2630;font-weight:normal;-webkit-text-stroke:0.2px #1d2630;">City/Town</div>
<div class="b" style="left:1542px;top:896px;width:320px;height:48px;background:#e5f1fb;border-radius:6px;"></div>
<div class="t" style="left:1558.0px;top:910.3px;font-size:20.8px;line-height:20.8px;color:#111;font-weight:normal;-webkit-text-stroke:0.35px #111;letter-spacing:-0.75px;">GLENNING VALLEY</div>
<div class="t" style="left:1757.5px;top:910.3px;font-size:20.8px;line-height:20.8px;color:#111;font-weight:normal;-webkit-text-stroke:0.35px #111;">NSW</div>
<div class="t" style="left:844.0px;width:1200px;text-align:right;top:908.6px;font-size:20.5px;line-height:20.5px;color:#1d2630;font-weight:normal;-webkit-text-stroke:0.2px #1d2630;">State</div>
<div class="b" style="left:2076px;top:896px;width:322px;height:48px;background:#e5f1fb;border-radius:6px;"></div>
<div class="t" style="left:309.0px;width:1200px;text-align:right;top:972.8px;font-size:20.87px;line-height:20.87px;color:#1d2630;font-weight:normal;-webkit-text-stroke:0.2px #1d2630;">Postcode</div>
<div class="b" style="left:1542px;top:960px;width:320px;height:48px;background:#e5f1fb;border-radius:6px;"></div>
<div class="t" style="left:1558.0px;top:975.6px;font-size:19.91px;line-height:19.91px;color:#111;font-weight:normal;-webkit-text-stroke:0.35px #111;">2261</div>
<div class="t" style="left:844.0px;width:1200px;text-align:right;top:973.3px;font-size:20.37px;line-height:20.37px;color:#1d2630;font-weight:normal;-webkit-text-stroke:0.2px #1d2630;">Country</div>
<div class="b" style="left:2076px;top:960px;width:322px;height:48px;background:#e5f1fb;border-radius:6px;"></div>
<svg class="b" style="left:2371.5px;top:978px;" width="14" height="10" viewBox="0 0 14 10"><path d="M1.5 2L7 7.5L12.5 2" fill="none" stroke="#2a2f36" stroke-width="1.7"/></svg>
<div class="t" style="left:309.0px;width:1200px;text-align:right;top:1036.8px;font-size:20.88px;line-height:20.88px;color:#1d2630;font-weight:normal;-webkit-text-stroke:0.2px #1d2630;">Latitude</div>
<div class="b" style="left:1542px;top:1024px;width:320px;height:48px;background:#e5f1fb;border-radius:6px;"></div>
<div class="t" style="left:844.0px;width:1200px;text-align:right;top:1037.0px;font-size:20.67px;line-height:20.67px;color:#1d2630;font-weight:normal;-webkit-text-stroke:0.2px #1d2630;">Longitude</div>
<div class="b" style="left:2076px;top:1024px;width:322px;height:48px;background:#e5f1fb;border-radius:6px;"></div>
<div class="t" style="left:1352.5px;top:1144.5px;font-size:37.5px;line-height:37.5px;color:#7f939f;font-weight:normal;transform:scaleY(1.06);transform-origin:0 84.65%;">Associated Contacts</div>
<div class="b" style="left:1328px;top:1198px;width:1070px;height:2px;background:#e9e9e9;border-radius:0;"></div>
<div class="t" style="left:1706.0px;top:1160.8px;font-size:18px;line-height:18px;color:#1f80ea;font-weight:normal;-webkit-text-stroke:0.2px #1f80ea;">Add</div>
<div class="b" style="left:128px;top:1272px;width:2330px;height:70px;background:linear-gradient(to bottom, rgba(0,0,0,0), rgba(0,0,0,0.05));border-radius:0;"></div>
<div class="b" style="left:2254px;top:1272px;width:174px;height:72px;background:#2a3642;border-radius:36px;"></div>
<svg class="b" style="left:2288px;top:1290px;" width="36" height="36" viewBox="0 0 36 36"><path d="M8.5 25.5C5 22.5 3.5 19 3.8 15C4.5 8 10 3.5 17.5 3.8C24.5 4.2 30 9.5 29.8 17C29.6 24 24 29.5 17 29.2C15.5 29.1 14 28.8 12.8 28.2L4.5 31.5Z" fill="none" stroke="#fff" stroke-width="3.6" stroke-linejoin="round"/></svg>
<div class="t" style="left:2335.0px;top:1297.5px;font-size:24.5px;line-height:24.5px;color:#fff;font-weight:bold;-webkit-text-stroke:0.3px #fff;">Chat</div>
</body></html>
